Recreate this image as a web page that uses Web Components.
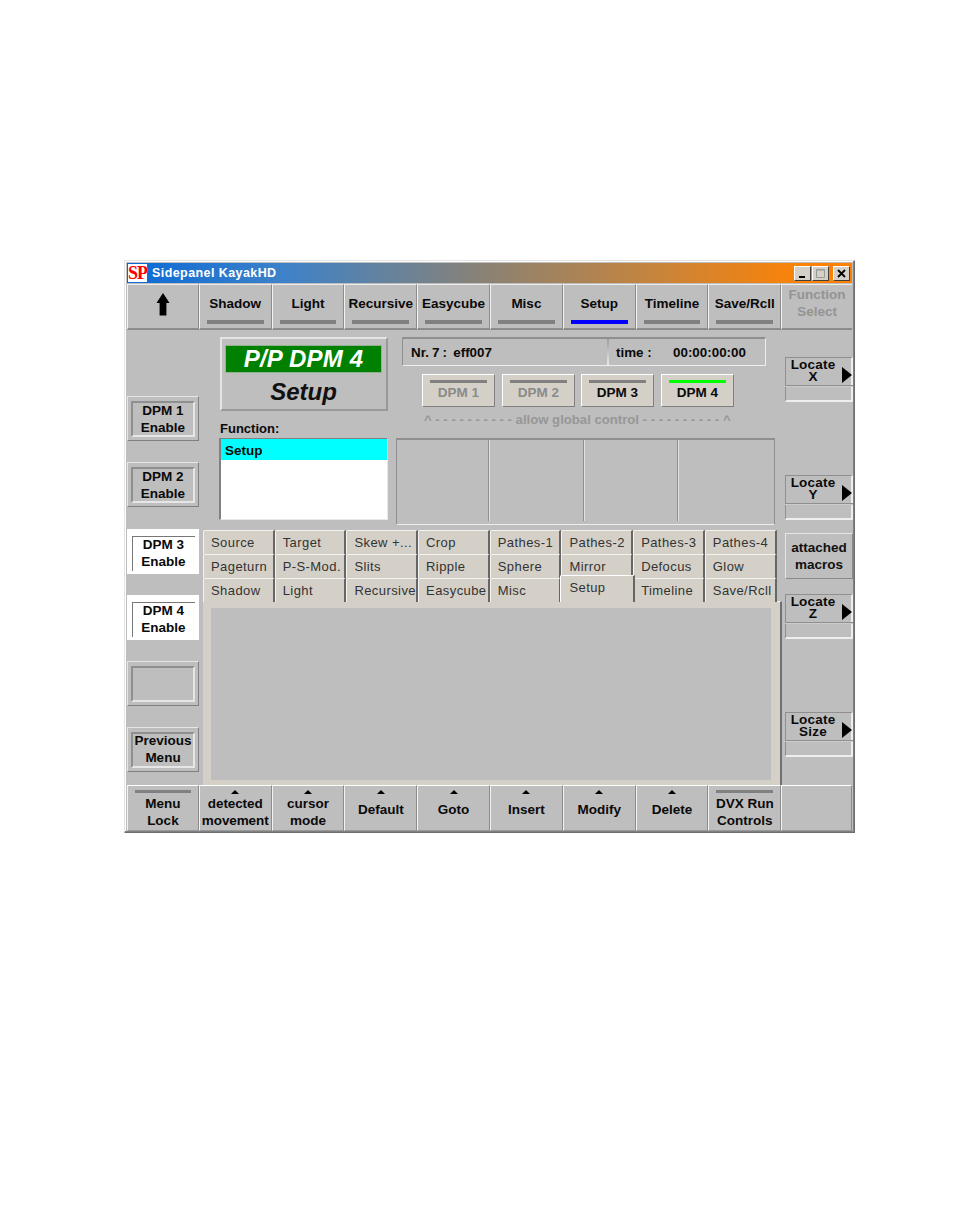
<!DOCTYPE html>
<html><head><meta charset="utf-8"><title>Sidepanel KayakHD</title>
<style>
html,body{margin:0;background:#fff}
body{padding:260px 0 0 124px;height:967px;box-sizing:border-box;overflow:hidden;font:bold 13.5px "Liberation Sans",Arial,sans-serif;color:#0a0a0a}
</style></head><body>
<sp-window>
  <sp-title slot="title">Sidepanel KayakHD</sp-title>
  <sp-row slot="top">
    <sp-cell w="72"><svg style="display:block;margin-top:2px" width="14" height="23" viewBox="0 0 14 23"><path d="M7 0 13.5 10H10.4V22.5H3.6V10H.5Z" fill="#000"/></svg></sp-cell>
    <sp-cell bar="#808080">Shadow</sp-cell><sp-cell bar="#808080">Light</sp-cell><sp-cell bar="#808080">Recursive</sp-cell><sp-cell bar="#808080">Easycube</sp-cell><sp-cell bar="#808080">Misc</sp-cell><sp-cell bar="#0000ff">Setup</sp-cell><sp-cell bar="#808080">Timeline</sp-cell><sp-cell bar="#808080">Save/Rcll</sp-cell>
    <sp-cell w="71" dim>Function<br>Select</sp-cell>
  </sp-row>
  <sp-side slot="left">
    <sp-enable>DPM 1<br>Enable</sp-enable>
    <sp-enable>DPM 2<br>Enable</sp-enable>
    <sp-enable on style="margin-top:1px">DPM 3<br>Enable</sp-enable>
    <sp-enable on>DPM 4<br>Enable</sp-enable>
    <sp-enable></sp-enable>
    <sp-enable style="padding-bottom:2px">Previous<br>Menu</sp-enable>
  </sp-side>
  <sp-center slot="center">
    <sp-effect slot="a" name="P/P DPM 4" fn="Setup"></sp-effect>
    <sp-function slot="a">Setup</sp-function>
    <sp-info slot="b"></sp-info>
    <sp-dpms slot="b">
      <sp-dpm dim>DPM 1</sp-dpm><sp-dpm dim>DPM 2</sp-dpm><sp-dpm style="margin-left:-1px">DPM 3</sp-dpm><sp-dpm bar="#00ff00">DPM 4</sp-dpm>
    </sp-dpms>
    <sp-global slot="b">^ - - - - - - - - - - allow global control - - - - - - - - - - ^</sp-global>
    <sp-slots slot="b"></sp-slots>
    <sp-tabs slot="c">
      <sp-tab>Source</sp-tab><sp-tab>Target</sp-tab><sp-tab>Skew +...</sp-tab><sp-tab>Crop</sp-tab><sp-tab>Pathes-1</sp-tab><sp-tab>Pathes-2</sp-tab><sp-tab>Pathes-3</sp-tab><sp-tab>Pathes-4</sp-tab>
      <sp-tab>Pageturn</sp-tab><sp-tab>P-S-Mod.</sp-tab><sp-tab>Slits</sp-tab><sp-tab>Ripple</sp-tab><sp-tab>Sphere</sp-tab><sp-tab>Mirror</sp-tab><sp-tab>Defocus</sp-tab><sp-tab>Glow</sp-tab>
      <sp-tab>Shadow</sp-tab><sp-tab>Light</sp-tab><sp-tab>Recursive</sp-tab><sp-tab>Easycube</sp-tab><sp-tab>Misc</sp-tab><sp-tab selected>Setup</sp-tab><sp-tab>Timeline</sp-tab><sp-tab>Save/Rcll</sp-tab>
    </sp-tabs>
    <sp-pane slot="c"></sp-pane>
  </sp-center>
  <sp-right slot="right">
    <sp-locate style="margin-top:27px">Locate<br>X</sp-locate>
    <sp-locate style="margin-top:73px">Locate<br>Y</sp-locate>
    <sp-macro>attached<br>macros</sp-macro>
    <sp-locate style="margin-top:15px">Locate<br>Z</sp-locate>
    <sp-locate style="margin-top:73px">Locate<br>Size</sp-locate>
  </sp-right>
  <sp-row slot="bottom">
    <sp-cell bottom w="72" bar="#808080">Menu<br>Lock</sp-cell>
    <sp-cell bottom mark tight>detected<br>movement</sp-cell>
    <sp-cell bottom mark>cursor<br>mode</sp-cell>
    <sp-cell bottom mark single>Default</sp-cell>
    <sp-cell bottom mark single>Goto</sp-cell>
    <sp-cell bottom mark single>Insert</sp-cell>
    <sp-cell bottom mark single>Modify</sp-cell>
    <sp-cell bottom mark single>Delete</sp-cell>
    <sp-cell bottom bar="#808080">DVX Run<br>Controls</sp-cell>
    <sp-cell bottom w="71"></sp-cell>
  </sp-row>
</sp-window>
<script>
function def(name, css, html, init){
  customElements.define(name, class extends HTMLElement{
    connectedCallback(){
      if(this.shadowRoot) return;
      const r=this.attachShadow({mode:'open'});
      r.innerHTML='<style>'+css+'</style>'+(typeof html==='function'?html(this):html);
      if(init) init(this,r);
    }
  });
}
def('sp-window',`
:host{display:block;width:731px;height:573px;box-sizing:border-box;background:#bebebe;border:1px solid #e4e4e4;border-right-color:#6e6e6e;border-bottom-color:#6e6e6e;padding:2px 2px 1px 2px;box-shadow:inset -1px -1px 0 #808080, inset 1px 1px 0 #fff}
.mid{display:flex;height:455px}
`,`<slot name="title"></slot><slot name="top"></slot><div class="mid"><slot name="left"></slot><slot name="center"></slot><slot name="right"></slot></div><slot name="bottom"></slot>`);
def('sp-title',`
:host{display:flex;align-items:center;height:20px;margin-bottom:1px;background:linear-gradient(90deg,#0a6ad6 0%,#3f82c8 22%,#8c8272 50%,#bf8444 70%,#fc8306 93%,#ff8000 100%);color:#fff;font:bold 12.5px "Liberation Sans",Arial,sans-serif;letter-spacing:.42px;gap:5px}
.i{width:19px;height:18px;margin-left:1px;background:#fff;color:#f00;font:bold 18px/18px "Liberation Serif",serif;letter-spacing:-1px;text-align:center}
.b{margin-left:auto;display:flex;gap:1px;padding-right:2px;letter-spacing:0}
.b span{width:17px;height:15px;box-sizing:border-box;background:#d4d0c8;border:1px solid #fff;border-right-color:#404040;border-bottom-color:#404040;display:flex;align-items:center;justify-content:center}
`,`<span class="i">SP</span><slot></slot><span class="b">
<span><svg width="11" height="11"><rect x="2" y="8" width="6" height="2" fill="#000"/></svg></span>
<span><svg width="11" height="11"><path d="M1.5 1.5h8v8h-8zM1 2h9" fill="none" stroke="#999"/></svg></span>
<span style="margin-left:3px"><svg width="11" height="11"><path d="M2 2 9 9M9 2 2 9" stroke="#000" stroke-width="1.8"/></svg></span></span>`);
def('sp-row',`:host{display:flex;height:46px}`,`<slot></slot>`);
def('sp-cell',`
:host{display:flex;flex-direction:column;align-items:center;justify-content:center;position:relative;box-sizing:border-box;width:var(--w,73px);height:46px;border-left:1px solid #f2f2f2;border-right:1px solid #8c8c8c;border-top:1px solid #ececec;border-bottom:2px solid #8c8c8c;text-align:center;line-height:17px;white-space:nowrap}
:host([bottom]){border-top-color:#fff;border-bottom:1px solid #999;padding-bottom:1px}
:host([dim]){color:#949494;padding-bottom:7px;border-right:0}
.bar{display:none;position:absolute;left:7px;right:7px;bottom:4px;height:4px}
.mark{display:none;position:absolute;left:50%;margin-left:-4px;top:4px;width:0;height:0;border:4px solid transparent;border-top:0;border-bottom:4px solid #000}
:host([bar]) .bar{display:block}
:host([mark]) .mark{display:block}
.t{padding-bottom:7px}
:host([dim]) .t{padding-bottom:0}
:host([bottom]) .t{padding:9px 0 0}
:host([bottom][single]) .t{padding:4px 0 0}
:host([bottom][bar]) .bar{top:4px;bottom:auto;height:3px}
:host([tight]) .t{letter-spacing:-.1px}
`,(h)=>`<span class="t"><slot></slot></span><span class="bar" style="background:${h.getAttribute('bar')||'none'}"></span><span class="mark"></span>`,
(h)=>{if(h.hasAttribute('w'))h.style.setProperty('--w',h.getAttribute('w')+'px')});
def('sp-side',`:host{display:flex;flex-direction:column;width:73px;box-sizing:border-box;padding:66px 0 0 0;gap:21px;flex:none}`,`<slot></slot>`);
def('sp-enable',`
:host{display:flex;align-items:center;justify-content:center;width:72px;height:45px;box-sizing:border-box;text-align:center;line-height:17px;border:1px solid;border-color:#e6e6e6 #808080 #808080 #e6e6e6;position:relative;background:#bebebe}
.f{position:absolute;inset:4px 3px 3px 3px;border:2px solid;border-color:#8f8f8f #e6e6e6 #e6e6e6 #8f8f8f}
:host([on]){background:#fff;border-color:#fff;padding:2px 0 0 1px}
:host([on]) .f{border-width:1px 0 0 1px;border-color:#777;top:6px;left:4px;right:3px;bottom:2px}
`,`<span class="f"></span><span style="position:relative"><slot></slot></span>`);
def('sp-center',`
:host{display:flex;flex-direction:column;width:582px;flex:none;height:455px;box-sizing:border-box}
.u{display:flex;height:200px;flex:none}
.a{width:169px;margin:7px 0 0 19px;flex:none}
.b{width:380px;margin:7px 0 0 8px;flex:none}
.c{flex:1}
`,`<div class="u"><div class="a"><slot name="a"></slot></div><div class="b"><slot name="b"></slot></div></div><div class="c"><slot name="c"></slot></div>`);
def('sp-effect',`
:host{display:block;width:168px;height:74px;margin-left:1px;box-sizing:border-box;border:2px solid;border-color:#e4e4e4 #999 #999 #e4e4e4;padding:6px 4px 0 3px;font-style:italic;text-align:center}
.g{background:#008000;color:#fff;height:28px;font:italic bold 24px/28px "Liberation Sans",Arial,sans-serif;letter-spacing:.2px;white-space:nowrap;box-shadow:0 0 0 1px #8fb48f inset}
.s{font:italic bold 24px/33px "Liberation Sans",Arial,sans-serif;color:#111;margin-top:2px}
`,(h)=>`<div class="g">${h.getAttribute('name')}</div><div class="s">${h.getAttribute('fn')}</div>`);
def('sp-function',`
:host{display:block;margin-top:9px}
.l{height:18px;line-height:17px;font-size:13px;padding-left:1px}
.b{width:169px;height:82px;box-sizing:border-box;background:#fff;border:1px solid;border-color:#808080 #e8e8e8 #e8e8e8 #808080;border-width:1px 1px 1px 2px}
.s{background:#00ffff;height:21px;line-height:23px;padding-left:4px;font-size:13.5px}
`,`<div class="l">Function:</div><div class="b"><div class="s"><slot></slot></div></div>`);
def('sp-info',`
:host{display:flex;align-items:center;width:364px;height:29px;margin-left:6px;box-sizing:border-box;border:2px solid;border-color:#8f8f8f #eee #eee #8f8f8f;border-width:2px 1px 1px 1px;font-size:13.4px;white-space:pre}
.n{width:206px;padding-left:8px;box-sizing:border-box;height:100%;display:flex;align-items:center;word-spacing:-.6px;border-right:2px solid;border-image:linear-gradient(#999,#eee) 1}
.t{padding-left:7px;width:57px}
`,`<span class="n">Nr. 7 :  eff007</span><span class="t">time :</span><span>00:00:00:00</span>`);
def('sp-dpms',`:host{display:flex;margin:8px 0 0 26px;gap:7px;width:320px}`,`<slot></slot>`);
def('sp-dpm',`
:host{display:block;position:relative;width:73px;height:33px;box-sizing:border-box;flex:none;background:#d4d0c8;border:1px solid;border-color:#fff #808080 #808080 #fff;text-align:center;line-height:35px;font-size:13.5px}
:host([dim]){color:#8a8a8a}
i{position:absolute;left:7px;right:7px;top:5px;height:3px;background:#808080}
`,(h)=>`<i style="${h.getAttribute('bar')?'background:'+h.getAttribute('bar'):''}"></i><slot></slot>`);
def('sp-global',`:host{display:block;margin:3px 0 0 28px;height:20px;line-height:19px;color:#979797;font-size:13.15px;white-space:pre;width:330px}`,`<slot></slot>`);
def('sp-slots',`
:host{display:grid;grid-template-columns:92px 95px 94px 1fr;width:379px;height:87px;margin-top:8px;box-sizing:border-box;border:1px solid;border-color:#8f8f8f #8f8f8f #ededed #8f8f8f;border-width:2px 1px 1px 1px}
i{border-right:1px solid #8f8f8f;box-shadow:1px 0 0 #e2e2e2;margin-bottom:3px}
i:last-child{border:0;box-shadow:none}
`,`<i></i><i></i><i></i><i></i>`);
def('sp-tabs',`:host{display:grid;grid-template-columns:repeat(8,71.7px);grid-auto-rows:24px;margin-left:3px;height:71px;position:relative;z-index:1;width:575px}`,`<slot></slot>`);
def('sp-tab',`
:host{display:block;box-sizing:border-box;height:24px;background:#d4d0c8;border-top:1px solid #f4f2ee;border-left:1px solid #f4f2ee;border-right:2px solid #666;font:13px/23px "Liberation Sans",Arial,sans-serif;letter-spacing:.42px;color:#333;padding-left:7px;white-space:nowrap;overflow:hidden;border-top-left-radius:2px}
:host([selected]){margin:-3px -2px 0 -1px;height:27px;line-height:24px;border-top-color:#fff;border-left-color:#fff;position:relative;z-index:2;padding-left:8px}
`,`<slot></slot>`);
def('sp-pane',`
:host{display:block;margin-left:3px;width:579px;height:184px;box-sizing:border-box;background:#d4d0c8;padding:6px 9px 5px 8px;border-top:1px solid #f4f2ee;border-right:2px solid #707070}
div{height:100%;background:#bebebe}
`,`<div></div>`);
def('sp-right',`:host{display:flex;flex-direction:column;flex:none;width:70px;padding-left:3px;box-sizing:border-box}`,`<slot></slot>`);
def('sp-locate',`
:host{display:block;position:relative;width:68px;height:45px;box-sizing:border-box;border:1px solid;border-color:#8f8f8f #eee #eee #8f8f8f;border-width:1px 2px 2px 1px;font:bold 13.5px/12px "Liberation Sans",Arial,sans-serif;letter-spacing:.2px}
.t{display:block;text-align:center;width:54px;padding-top:1px;height:26px}
.h{position:absolute;left:-1px;right:-2px;top:27px;border-top:1px solid #8f8f8f;border-bottom:1px solid #ccc}
.a{position:absolute;right:-1px;top:9px;width:0;height:0;border:8.5px solid transparent;border-left:10px solid #000;border-right:0}
`,`<span class="t"><slot></slot></span><span class="h"></span><span class="a"></span>`);
def('sp-macro',`
:host{display:flex;align-items:center;justify-content:center;width:68px;height:46px;margin-top:13px;box-sizing:border-box;border:1px solid;border-color:#e6e6e6 #8a8a8a #8a8a8a #e6e6e6;text-align:center;line-height:17px;color:#111}
`,`<span><slot></slot></span>`);
</script>
</body></html>
